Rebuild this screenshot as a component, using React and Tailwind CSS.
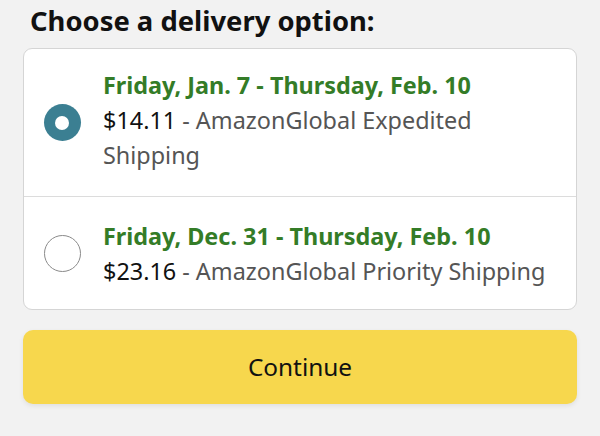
import React from "react";

function Radio({ checked }) {
  return checked ? (
    <div className="w-[37px] h-[37px] rounded-full bg-[#3b7f92] flex items-center justify-center shrink-0">
      <div className="w-[14px] h-[14px] rounded-full bg-white" />
    </div>
  ) : (
    <div className="w-[37px] h-[37px] rounded-full border-[1.5px] border-[#8a8a8a] bg-white shrink-0" />
  );
}

export default function App() {
  return (
    <div className="w-[600px] h-[436px] bg-[#f2f2f2] overflow-hidden" style={{ fontFamily: '"Noto Sans", sans-serif' }}>
      <div className="px-[23px] pt-[1px]">
        <h1 className="pl-[7px] text-[27.4px] leading-[40px] font-bold text-[#111]">Choose a delivery option:</h1>
        <div className="mt-[7px] bg-white border border-[#d5d5d5] rounded-[9px]">
          <div className="flex items-center h-[148px] border-b border-[#dcdcdc]">
            <div className="w-[76px] flex justify-center"><Radio checked /></div>
            <div className="pl-[3px] text-[23.4px] leading-[35px] pb-[4px]">
              <div className="font-bold text-[#347c27]">Friday, Jan. 7 - Thursday, Feb. 10</div>
              <div className="text-[#555]"><span className="text-[#111]">$14.11</span> - AmazonGlobal Expedited<br />Shipping</div>
            </div>
          </div>
          <div className="flex items-center h-[112px]">
            <div className="w-[76px] flex justify-center"><Radio /></div>
            <div className="pl-[3px] text-[23.4px] leading-[35px] pt-[1px]">
              <div className="font-bold text-[#347c27]">Friday, Dec. 31 - Thursday, Feb. 10</div>
              <div className="text-[#555]"><span className="text-[#111]">$23.16</span> - AmazonGlobal Priority Shipping</div>
            </div>
          </div>
        </div>
        <button className="mt-[20px] w-full h-[74px] rounded-[10px] bg-[#f7d74d] text-[24.4px] text-[#111] shadow-[0_2px_5px_rgba(0,0,0,0.08)]">Continue</button>
      </div>
    </div>
  );
}
